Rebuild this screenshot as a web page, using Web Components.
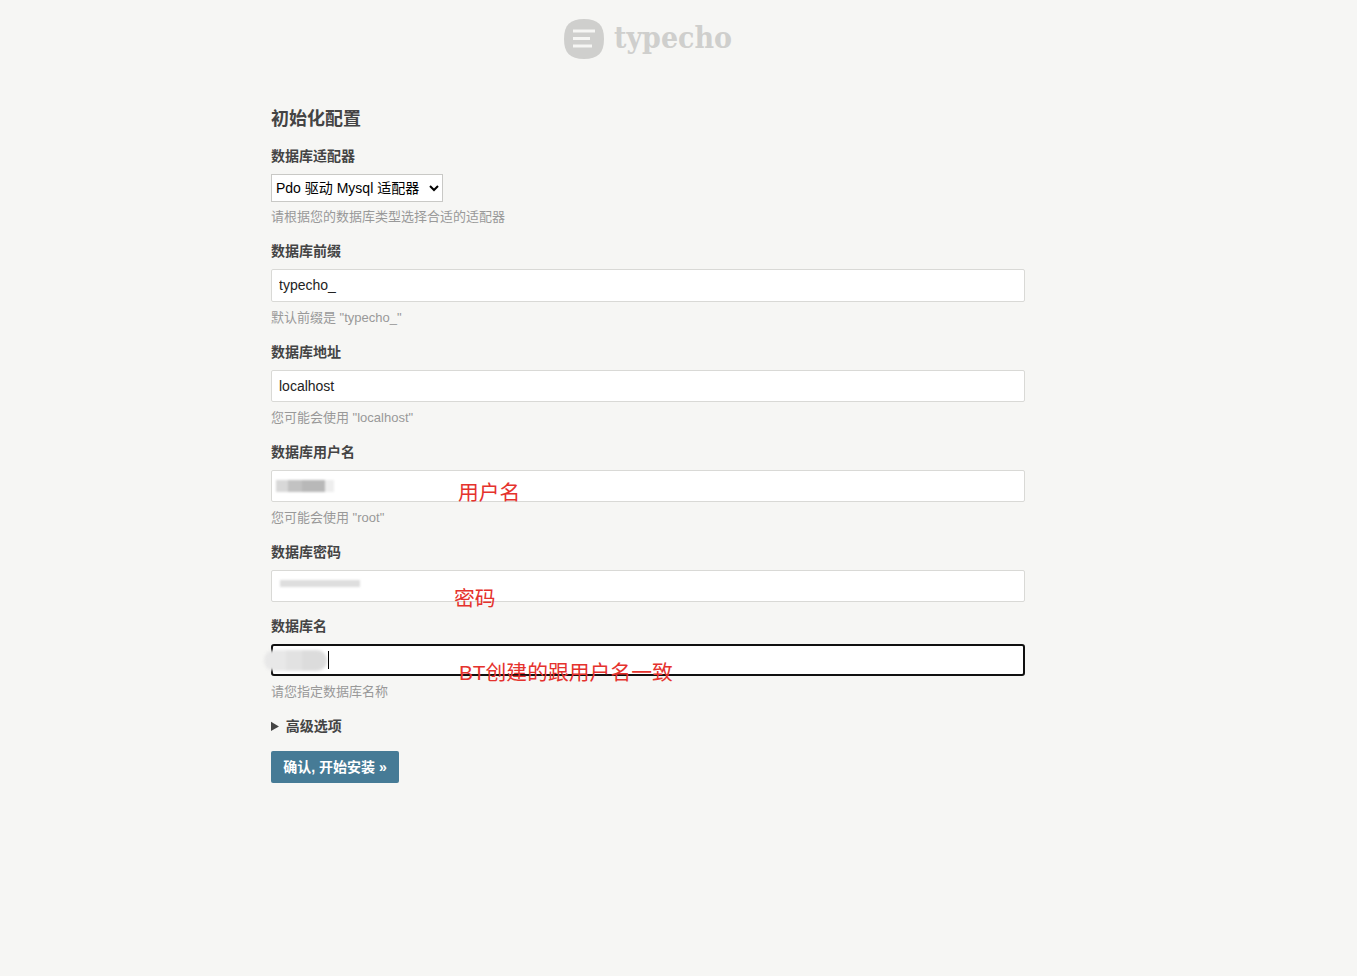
<!DOCTYPE html>
<html lang="zh">
<head>
<meta charset="utf-8">
<title>Typecho 安装程序</title>
<style>
  html, body { margin: 0; background: #f6f6f4; }
  body { font: 14px "Liberation Sans", "Noto Sans CJK SC", sans-serif; color: #444; }
</style>
</head>
<body>
<install-page>
  <install-field label="数据库适配器" hint="请根据您的数据库类型选择合适的适配器" kind="select" value="Pdo 驱动 Mysql 适配器"></install-field>
  <install-field label="数据库前缀" hint="默认前缀是 &quot;typecho_&quot;" value="typecho_" style="--input-height: 33px; --input-pad: 2px"></install-field>
  <install-field label="数据库地址" hint="您可能会使用 &quot;localhost&quot;" value="localhost"></install-field>
  <install-field label="数据库用户名" hint="您可能会使用 &quot;root&quot;" smudge="user" note="用户名"></install-field>
  <install-field label="数据库密码" smudge="pass" note="密码" style="--note-x: 183px; --note-y: 14px"></install-field>
  <install-field label="数据库名" hint="请您指定数据库名称" smudge="name" note="BT创建的跟用户名一致" focused style="--note-x: 188px; --note-y: 14px"></install-field>
</install-page>
<script>
const pageTemplate = document.createElement("template");
pageTemplate.innerHTML = `
<style>
  :host { display: block; min-height: 976px; box-sizing: border-box; padding: 19px 61px 0 0; }
  .logo { display: flex; justify-content: center; height: 40px; }
  .logo svg { display: block; overflow: visible; }
  .logo text { font: bold 30px "DejaVu Serif Condensed", "DejaVu Serif", serif; fill: #cfcfcd; }
  main { width: 754px; margin: 0 auto; }
  h1 { margin: 47px 0 14px; font-size: 18px; line-height: 26px; color: #444; }
  .fields { display: flex; flex-direction: column; gap: 14px; }
  details { margin-top: 14px; font-weight: bold; line-height: 20px; color: #444; }
  summary { cursor: pointer; }
  button {
    display: block; margin-top: 15px; height: 32px; padding: 0 12px 2px; width: 128px; border: 0; border-radius: 2px;
    background: #467b96; color: #fff; font: bold 14px "Liberation Sans", "Noto Sans CJK SC", sans-serif;
  }
</style>
<header class="logo">
  <svg width="168" height="40" viewBox="0 0 168 40">
    <path d="M20 0C34 0 40 6 40 20S34 40 20 40 0 34 0 20 6 0 20 0Z" fill="#cfcfcd"/>
    <path d="M9 12h22M9 19.5h17M9 27h19" stroke="#f6f6f4" stroke-width="2.8" fill="none"/>
    <text x="50" y="29" textLength="118" lengthAdjust="spacingAndGlyphs">typecho</text>
  </svg>
</header>
<main>
  <h1>初始化配置</h1>
  <div class="fields"><slot></slot></div>
  <details><summary>高级选项</summary></details>
  <button type="button">确认, 开始安装 »</button>
</main>
`;

class InstallPage extends HTMLElement {
  constructor() {
    super();
    this.attachShadow({ mode: "open" });
    this.shadowRoot.appendChild(pageTemplate.content.cloneNode(true));
  }
}

const fieldTemplate = document.createElement("template");
fieldTemplate.innerHTML = `
<style>
  :host { display: block; position: relative; }
  :host([kind="select"]) .hint { margin-top: 7px; }
  label { display: block; font-weight: bold; line-height: 20px; color: #444; margin-bottom: 8px; }
  .control { position: relative; }
  input {
    display: block; width: 100%; height: var(--input-height, 32px); box-sizing: border-box; margin: 0;
    padding: 0 7px var(--input-pad, 0);
    border: 1px solid #d9d9d6; border-radius: 2px; background: #fff; color: #222; outline: 0;
    font: 14px "Liberation Sans", "Noto Sans CJK SC", sans-serif;
  }
  :host([focused]) input { border: 2px solid #101010; border-radius: 3px; }
  select {
    display: block; width: 172px; height: 28px; margin: 1px 0 -2px; padding: 0;
    border: 1px solid #c9c9c6; border-radius: 0; background: #fff; color: #000;
    font: 14px "Liberation Sans", "Noto Sans CJK SC", sans-serif;
  }
  .hint { margin-top: 6px; font-size: 13px; line-height: 20px; color: #999; }
  .hint:empty { display: none; }
  .note {
    position: absolute; left: var(--note-x, 187px); top: var(--note-y, 8px); white-space: nowrap; pointer-events: none;
    font: 20.8px/30px "Liberation Sans", "Noto Sans CJK SC", sans-serif; color: #e5322d;
  }
  .smudge { position: absolute; filter: blur(1px); pointer-events: none; }
  .user { left: 5px; top: 10px; width: 58px; height: 12px;
    background: linear-gradient(90deg, #d8d8d8 0 20%, #c2c2c2 20% 45%, #b8b8b8 45% 85%, #eee 85%); }
  .pass { left: 9px; top: 10px; width: 80px; height: 7px; background: #dedede; }
  .name { left: -7px; top: 6px; width: 63px; height: 21px; border-radius: 10px; filter: blur(1.5px);
    background: linear-gradient(90deg, #e8e8e8 0 35%, #e2e2e2 35% 60%, #dcdcdc 60%); }
  .caret { position: absolute; left: 57px; top: 7px; width: 1px; height: 18px; background: #000; }
</style>
<label></label>
<div class="control"></div>
<div class="hint"></div>
`;

class InstallField extends HTMLElement {
  constructor() {
    super();
    this.attachShadow({ mode: "open" });
    this.shadowRoot.appendChild(fieldTemplate.content.cloneNode(true));
  }

  connectedCallback() {
    const root = this.shadowRoot;
    root.querySelector("label").textContent = this.getAttribute("label");
    root.querySelector(".hint").textContent = this.getAttribute("hint") || "";

    const control = root.querySelector(".control");
    const value = this.getAttribute("value") || "";
    if (this.getAttribute("kind") === "select") {
      const select = document.createElement("select");
      select.appendChild(new Option(value));
      control.appendChild(select);
    } else {
      const input = document.createElement("input");
      input.value = value;
      control.appendChild(input);
    }

    const smudge = this.getAttribute("smudge");
    if (smudge) {
      const box = document.createElement("div");
      box.className = "smudge " + smudge;
      control.appendChild(box);
    }
    if (this.hasAttribute("focused")) {
      const caret = document.createElement("div");
      caret.className = "caret";
      control.appendChild(caret);
    }
    const note = this.getAttribute("note");
    if (note) {
      const text = document.createElement("div");
      text.className = "note";
      text.textContent = note;
      control.appendChild(text);
    }
  }
}

customElements.define("install-page", InstallPage);
customElements.define("install-field", InstallField);
</script>
</body>
</html>
